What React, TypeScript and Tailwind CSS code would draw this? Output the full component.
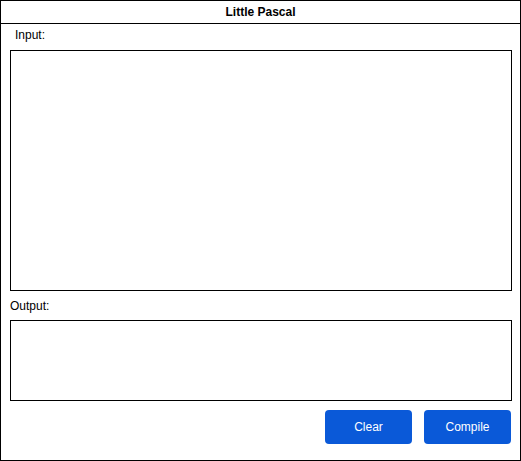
export default function App() {
  return (
    <div
      className="w-[521px] h-[461px] border border-black bg-white flex flex-col text-black"
      style={{ fontFamily: '"Liberation Sans", Arial, sans-serif' }}
    >
      <div className="h-[23px] border-b border-black flex items-center justify-center text-[12px] font-bold">
        Little Pascal
      </div>
      <div className="flex flex-col pl-[9px] pr-[8px]">
        <div className="h-[26px] pt-[4px] pl-[5px] text-[12px] leading-[14px]">Input:</div>
        <div className="h-[241px] border border-black"></div>
        <div className="h-[29px] flex items-center text-[12px]">Output:</div>
        <div className="h-[81px] border border-black"></div>
        <div className="mt-[9px] mr-[1px] flex justify-end gap-[12px]">
          <button className="w-[87px] h-[34px] rounded-[4px] bg-[#0a59d8] text-white text-[12px]">
            Clear
          </button>
          <button className="w-[87px] h-[34px] rounded-[4px] bg-[#0a59d8] text-white text-[12px]">
            Compile
          </button>
        </div>
      </div>
    </div>
  );
}
